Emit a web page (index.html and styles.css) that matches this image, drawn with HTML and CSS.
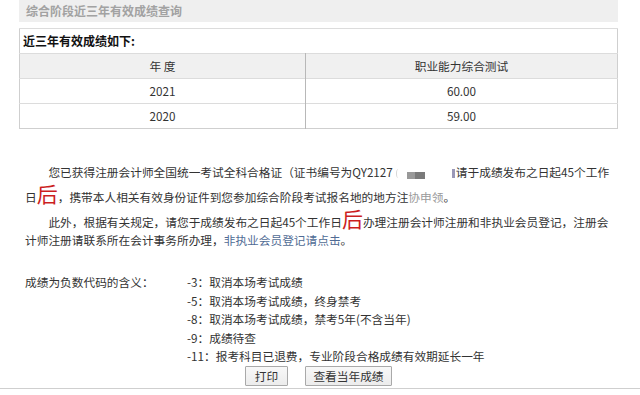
FILE: index.html
```html
<!DOCTYPE html>
<html lang="zh-CN">
<head>
<meta charset="utf-8">
<title>综合阶段近三年有效成绩查询</title>
<link rel="stylesheet" href="styles.css">
</head>
<body>
<div class="page">
  <div class="title">综合阶段近三年有效成绩查询</div>
  <table class="scores">
    <tr class="caption-row"><td colspan="2">近三年有效成绩如下:</td></tr>
    <tr class="head"><td class="col1">年 度</td><td>职业能力综合测试</td></tr>
    <tr><td class="col1">2021</td><td>60.00</td></tr>
    <tr><td class="col1">2020</td><td>59.00</td></tr>
  </table>
  <div class="notice">
    <p><span>您已获得注册会计师全国统一考试全科合格证（证书编号为QY2127</span><span class="redact"><span class="r1"></span><span class="r2"></span><span class="r3"></span></span><span>请于成绩发布之日起45个工作</span><span>日</span><span class="big">后</span><span>，携带本人相关有效身份证件到您参加综合阶段考试报名地的地方注</span><span class="faded">协申领</span>。</p>
    <p><span>此外，根据有关规定，请您于成绩发布之日起45个工作日</span><span class="big">后</span><span>办理注册会计师注册和非执业会员登记，注册会</span><span>计师注册请联系所在会计事务所办理，</span><a class="link" href="#">非执业会员登记请点击</a>。</p>
  </div>
  <div class="codes">
    <div class="codes-label">成绩为负数代码的含义：</div>
    <ul class="codes-list">
      <li>-3：取消本场考试成绩</li>
      <li>-5：取消本场考试成绩，终身禁考</li>
      <li>-8：取消本场考试成绩，禁考5年(不含当年)</li>
      <li>-9：成绩待查</li>
      <li>-11：报考科目已退费，专业阶段合格成绩有效期延长一年</li>
    </ul>
  </div>
  <div class="actions">
    <button class="btn btn-print">打印</button>
    <button class="btn btn-view">查看当年成绩</button>
  </div>
</div>
<div class="bottom-line"></div>
</body>
</html>
```
FILE: styles.css
```css
html, body {
  margin: 0;
  padding: 0;
  background: #fff;
}
body {
  font-family: "Noto Sans CJK SC", "Noto Sans", sans-serif;
  font-size: 11.7px;
  color: #333;
}
.page {
  margin-left: 19px;
  width: 599px;
}
.title {
  height: 22px;
  line-height: 21px;
  background: #efefef;
  color: #a2a2a2;
  font-weight: bold;
  padding-left: 7px;
  font-size: 12px;
}
.scores {
  margin-top: 6px;
  width: 599px;
  border-collapse: collapse;
  border: 1px solid #cfcfcf;
}
.scores td {
  height: 24px;
  padding: 0;
  text-align: center;
  border-top: 1px solid #dcdcdc;
  line-height: 24px;
}
.scores td.col1 {
  width: 285px;
  border-right: 1px solid #b8b8b8;
}
.caption-row td {
  text-align: left;
  font-weight: bold;
  color: #111;
  padding-left: 3px;
  font-size: 12px;
}
.head td {
  background: #f0f0f0;
}
.notice {
  margin-top: 34px;
  padding-left: 6px;
  padding-right: 2px;
}
.notice p {
  margin: 0;
  line-height: 18px;
  text-indent: 2em;
}
.big {
  font-size: 21px;
  line-height: 25px;
  color: #cc1f1f;
}
.faded {
  color: #9a9a9a;
}
.link {
  color: #4f6b94;
  text-decoration: none;
}
.redact {
  display: inline-flex;
  align-items: center;
  width: 63px;
  height: 12px;
  text-indent: 0;
  vertical-align: -1px;
}
.r1 {
  width: 4px;
  height: 9px;
  margin-left: 3px;
  border-left: 1px solid #d6d6d6;
  border-radius: 50%;
  filter: blur(0.4px);
}
.r2 {
  width: 18px;
  height: 7px;
  margin-left: 6px;
  margin-top: 3px;
  background: linear-gradient(90deg, #999 0, #999 45%, #7a7a7a 45%, #7a7a7a 100%);
  filter: blur(0.4px);
}
.r3 {
  width: 3px;
  height: 9px;
  margin-left: auto;
  margin-right: 1px;
  background: #9a98b8;
  filter: blur(0.4px);
}
.codes {
  margin-top: 24px;
  padding-left: 6px;
  display: grid;
  grid-template-columns: 162px 1fr;
  line-height: 18.5px;
}
.codes-list {
  list-style: none;
  margin: 0;
  padding: 0;
}
.actions {
  display: flex;
  justify-content: center;
  gap: 17px;
  margin-top: 0;
}
.btn {
  height: 20px;
  padding: 0;
  font-family: inherit;
  font-size: 11.7px;
  color: #333;
  background: linear-gradient(#f8f8f8, #ececec);
  border: 1px solid #a9a9a9;
  border-radius: 1px;
}
.btn-print {
  width: 43px;
}
.btn-view {
  width: 87px;
}
.bottom-line {
  margin-top: 2px;
  height: 1px;
  background: #cfcfcf;
}
```
